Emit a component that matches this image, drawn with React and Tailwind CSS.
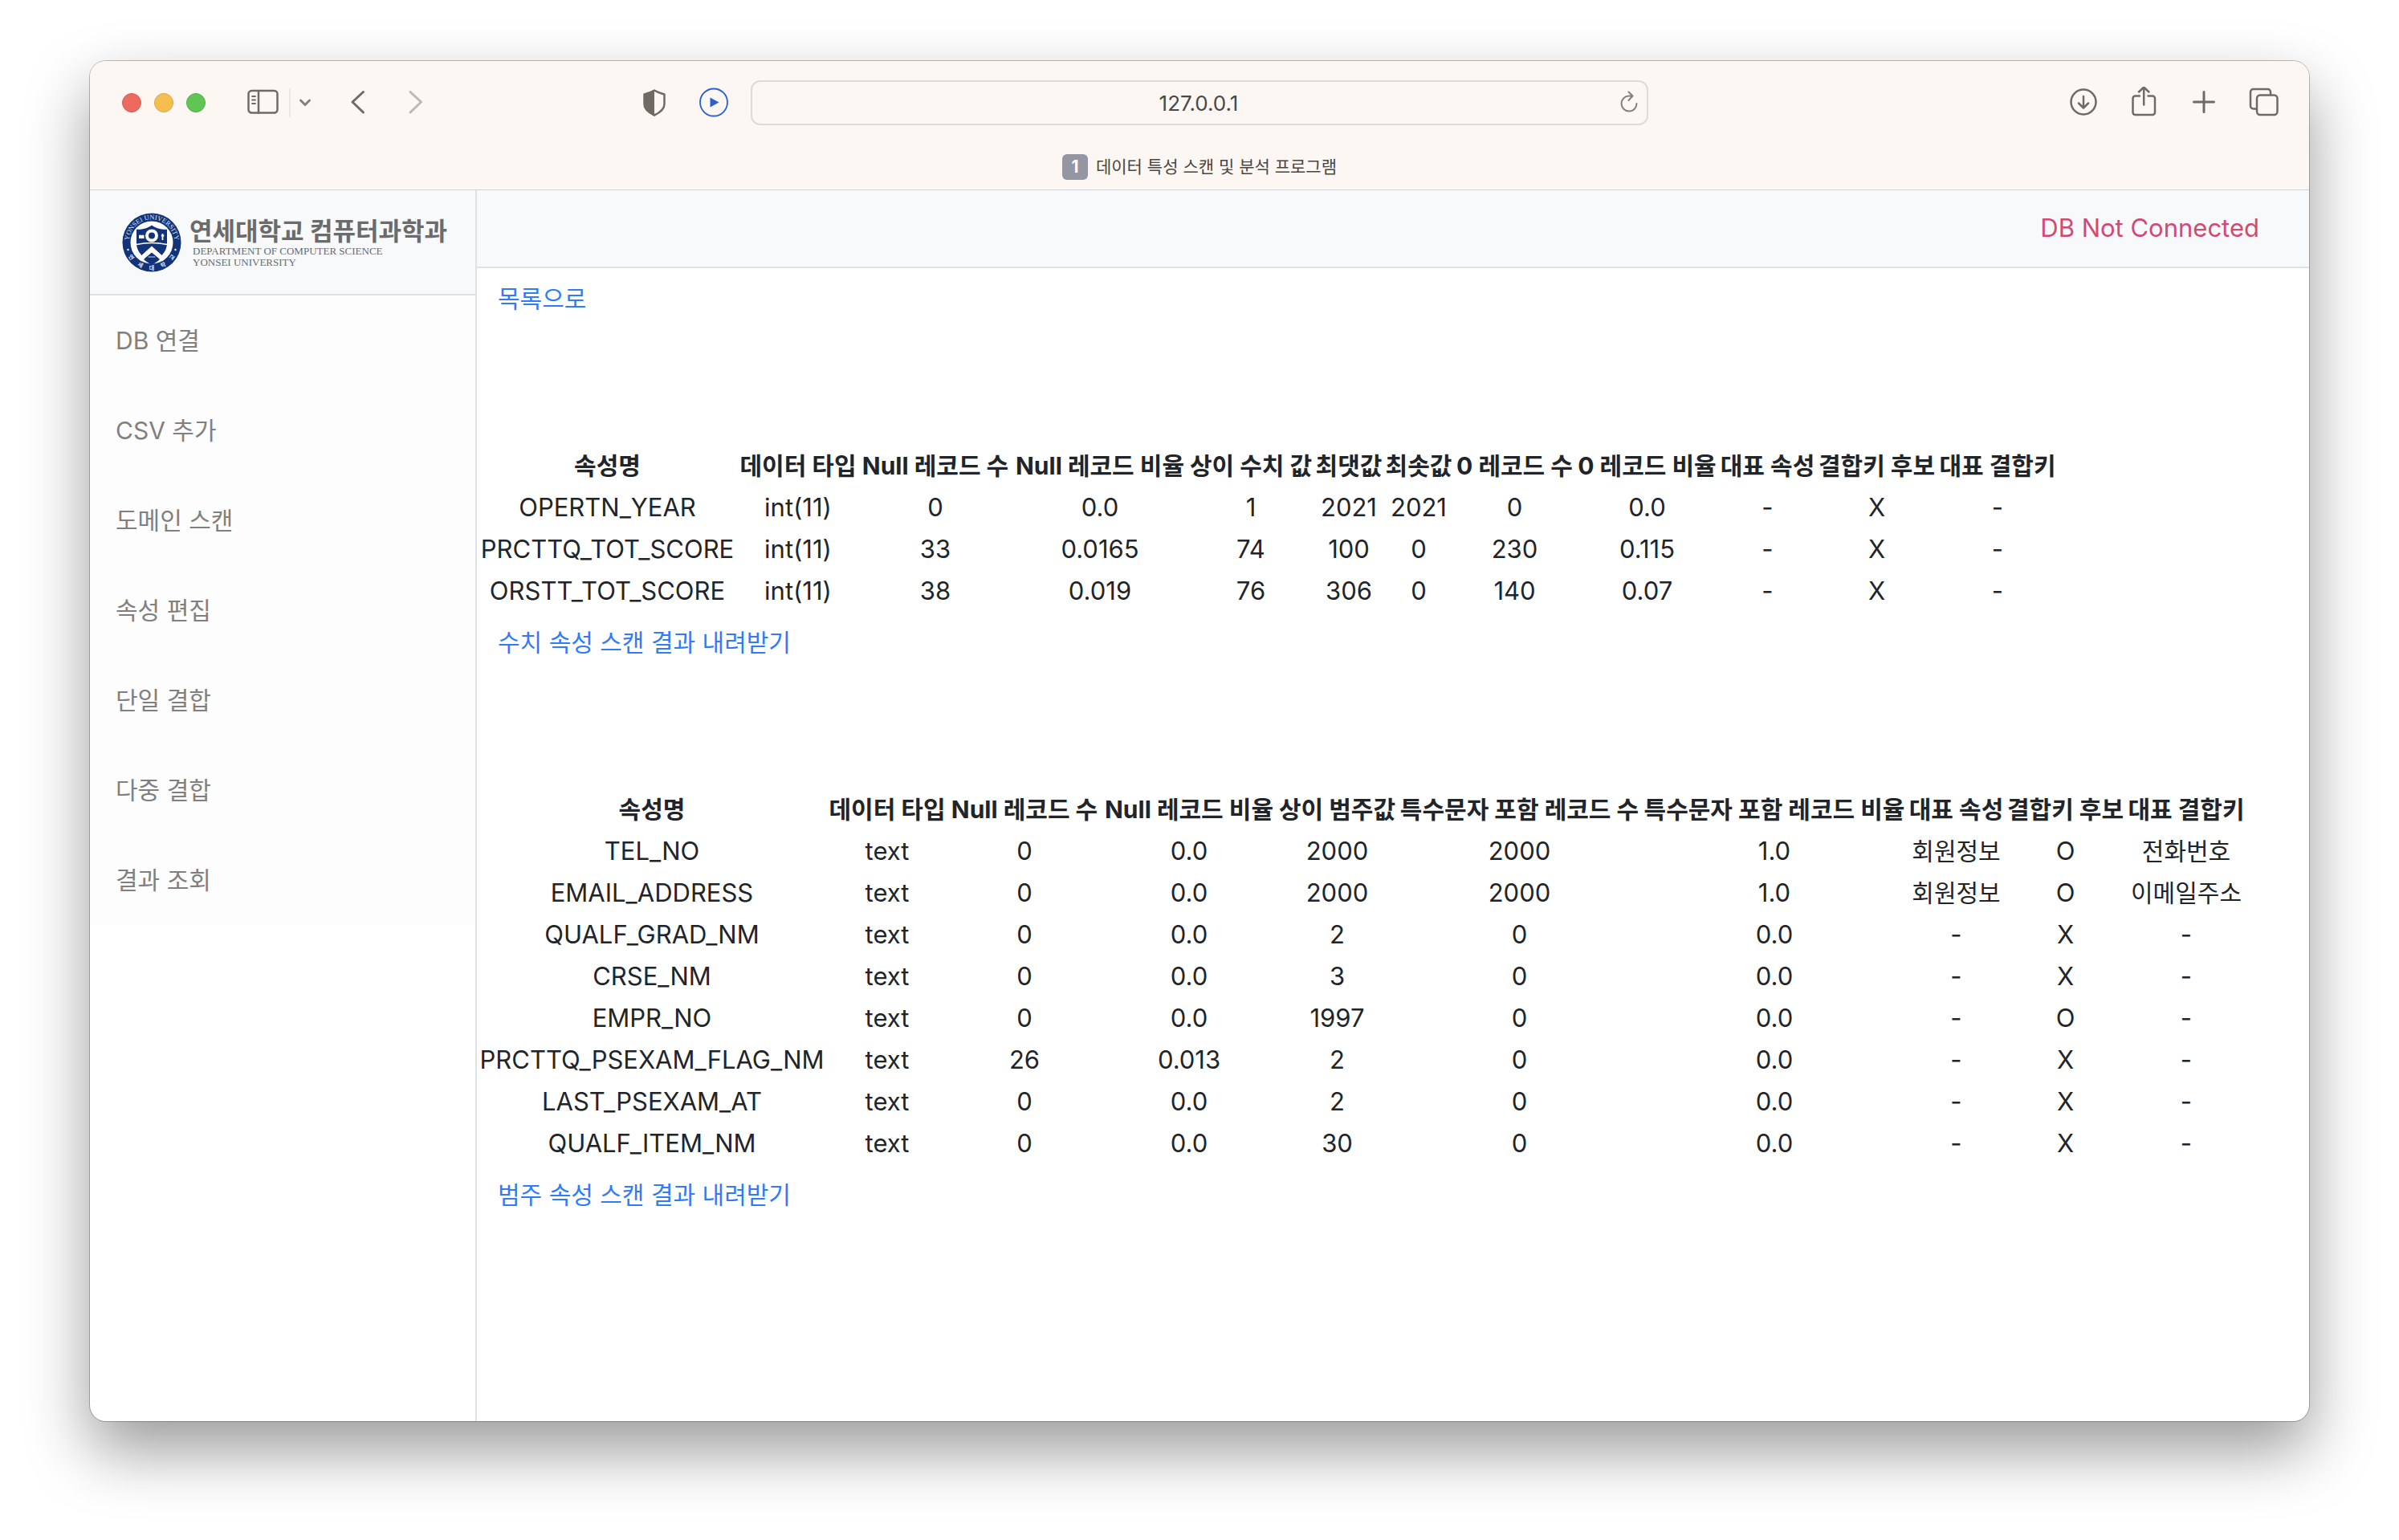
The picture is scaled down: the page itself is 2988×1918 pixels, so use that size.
import React from "react";

const MENU = ["DB 연결", "CSV 추가", "도메인 스캔", "속성 편집", "단일 결합", "다중 결합", "결과 조회"];

const NUMERIC = {
  cols: ["w-[325px]", "w-[150px]", "w-[192px]", "w-[218px]", "w-[158px]", "w-[86px]", "w-[88px]", "w-[151px]", "w-[179px]", "w-[121px]", "w-[151px]", "w-[150px]"],
  head: ["속성명", "데이터 타입", "Null 레코드 수", "Null 레코드 비율", "상이 수치 값", "최댓값", "최솟값", "0 레코드 수", "0 레코드 비율", "대표 속성", "결합키 후보", "대표 결합키"],
  rows: [
    ["OPERTN_YEAR", "int(11)", "0", "0.0", "1", "2021", "2021", "0", "0.0", "-", "X", "-"],
    ["PRCTTQ_TOT_SCORE", "int(11)", "33", "0.0165", "74", "100", "0", "230", "0.115", "-", "X", "-"],
    ["ORSTT_TOT_SCORE", "int(11)", "38", "0.019", "76", "306", "0", "140", "0.07", "-", "X", "-"],
  ],
};

const CATEGORY = {
  cols: ["w-[436px]", "w-[150px]", "w-[192px]", "w-[218px]", "w-[151px]", "w-[303px]", "w-[332px]", "w-[121px]", "w-[151px]", "w-[150px]"],
  head: ["속성명", "데이터 타입", "Null 레코드 수", "Null 레코드 비율", "상이 범주값", "특수문자 포함 레코드 수", "특수문자 포함 레코드 비율", "대표 속성", "결합키 후보", "대표 결합키"],
  rows: [
    ["TEL_NO", "text", "0", "0.0", "2000", "2000", "1.0", "회원정보", "O", "전화번호"],
    ["EMAIL_ADDRESS", "text", "0", "0.0", "2000", "2000", "1.0", "회원정보", "O", "이메일주소"],
    ["QUALF_GRAD_NM", "text", "0", "0.0", "2", "0", "0.0", "-", "X", "-"],
    ["CRSE_NM", "text", "0", "0.0", "3", "0", "0.0", "-", "X", "-"],
    ["EMPR_NO", "text", "0", "0.0", "1997", "0", "0.0", "-", "O", "-"],
    ["PRCTTQ_PSEXAM_FLAG_NM", "text", "26", "0.013", "2", "0", "0.0", "-", "X", "-"],
    ["LAST_PSEXAM_AT", "text", "0", "0.0", "2", "0", "0.0", "-", "X", "-"],
    ["QUALF_ITEM_NM", "text", "0", "0.0", "30", "0", "0.0", "-", "X", "-"],
  ],
};

const SEAL_LETTERS = [["연", "20%"], ["세", "35%"], ["대", "50%"], ["학", "65%"], ["교", "80%"]];

function Icon({ children, className = "", box = "0 0 40 40" }) {
  return (
    <svg viewBox={box} className={"size-10 shrink-0 " + className} fill="none" stroke="currentColor" strokeWidth="3" strokeLinecap="round" strokeLinejoin="round" aria-hidden="true">
      {children}
    </svg>
  );
}

function Seal() {
  return (
    <svg viewBox="0 0 74 74" className="size-[74px] shrink-0" aria-hidden="true">
      <defs>
        <path id="seal-top" d="M9.500 44.400A28.500 28.500 0 1 1 64.500 44.400" />
        <path id="seal-bottom" d="M3 37a34 34 0 0 0 68 0" />
      </defs>
      <circle cx="37" cy="37" r="36.500" fill="#12337a" />
      <circle cx="37" cy="37" r="26.500" fill="#fff" />
      <text fontSize="8.500" fill="#dfe5f1" fontFamily="Liberation Serif, serif" textAnchor="middle">
        <textPath href="#seal-top" startOffset="50%">YONSEI UNIVERSITY</textPath>
      </text>
      {SEAL_LETTERS.map(([c, at]) => (
        <text key={c} fontSize="7" fill="#dfe5f1" fontWeight="700" fontFamily="Noto Sans CJK KR, sans-serif" textAnchor="middle">
          <textPath href="#seal-bottom" startOffset={at}>{c}</textPath>
        </text>
      ))}
      <circle cx="7.500" cy="46" r="1.200" fill="#fff" />
      <circle cx="66.500" cy="46" r="1.200" fill="#fff" />
      <path d="M37 15.500c5 4 12 5.500 19 5.200v17c0 10-7 18-19 24-12-6-19-14-19-24v-17c7 .3 14-1.200 19-5.200z" fill="#12337a" />
      <path d="M18 39.500c12-2.500 26-2.500 38 0" stroke="#fff" strokeWidth="1.500" fill="none" />
      <path d="M37 41.500 54 57l-4 3.500-13-11-13 11-4-3.500z" fill="#fff" />
      <path d="m37 50 10 8c-3 3-6 5-10 6.500-4-1.500-7-3.500-10-6.500z" fill="#12337a" />
      <path d="M32.500 55h9" stroke="#8c9cc0" strokeWidth="1.500" />
      <circle cx="37" cy="28.500" r="6" fill="none" stroke="#fff" strokeWidth="4" />
      <path d="M21 28c1.200-.8 2.300-.8 3.300 0 1-.8 2.100-.8 3.200 0v4h-6.500z" fill="#fff" />
      <path d="M50.500 26v8M48.800 28.500h3.500" stroke="#fff" strokeWidth="1.800" />
    </svg>
  );
}

function Toolbar() {
  return (
    <header className="border-b border-[#cfd1d5] bg-[#fcf7f3] text-[#706a64]">
      <div className="grid h-[104px] grid-cols-[823fr_1118fr_823fr] items-center">
        <div className="flex items-center pr-[26px] pl-10">
          <div className="flex gap-4">
            <button aria-label="닫기" className="size-6 rounded-full border border-[#d85a50] bg-[#ec6a5e]" />
            <button aria-label="최소화" className="size-6 rounded-full border border-[#dca63f] bg-[#f5bf4f]" />
            <button aria-label="확대" className="size-6 rounded-full border border-[#50ad41] bg-[#61c554]" />
          </div>
          <button aria-label="사이드바" className="ml-13">
            <Icon>
              <rect x="1.500" y="5" width="36" height="27.500" rx="4" strokeWidth="2.500" />
              <path d="M14 5v27.500" strokeWidth="2.500" />
              <path d="M6 12h4M6 16.500h4M6 21h4" strokeWidth="1.800" />
            </Icon>
          </button>
          <div className="ml-3 h-9 w-0.5 bg-[#ece7e3]" />
          <button aria-label="탭 그룹" className="ml-2">
            <svg viewBox="0 0 20 40" className="h-10 w-5" fill="none" stroke="#858079" strokeWidth="3" strokeLinecap="round" strokeLinejoin="round" aria-hidden="true">
              <path d="m4.500 17 5.500 5.500 5.500-5.500" />
            </svg>
          </button>
          <button aria-label="뒤로" className="ml-9">
            <Icon><path d="M26.500 6.500 13 19l13.500 13" /></Icon>
          </button>
          <button aria-label="앞으로" className="ml-8 text-[#bdb8b3]" disabled>
            <Icon><path d="m13 6.500 13.500 12.500L13 32" /></Icon>
          </button>
          <button aria-label="개인정보 보호 리포트" className="ml-auto">
            <Icon>
              <path d="M20 4.500c4 2.500 8 3.500 12.500 5v12c0 6.500-5 10.500-12.500 14-7.500-3.500-12.500-7.500-12.500-14v-12C12 8 16 7 20 4.500z" strokeWidth="2.500" />
              <path d="M20 4.500v31c-7.500-3.500-12.500-7.500-12.500-14v-12C12 8 16 7 20 4.500z" fill="currentColor" stroke="none" />
            </Icon>
          </button>
          <button aria-label="재생" className="ml-[34px] text-[#2a5fd6]">
            <Icon>
              <circle cx="20" cy="19.500" r="17" strokeWidth="1.800" />
              <path d="M15.500 13.500v12l11-6z" fill="currentColor" stroke="none" />
            </Icon>
          </button>
        </div>
        <div className="flex h-14 items-center rounded-xl border-2 border-[#dedad5] pr-1.5 pl-9">
          <input aria-label="주소" defaultValue="127.0.0.1" className="min-w-0 flex-1 bg-transparent text-center text-[26px] text-[#4a4846] outline-none" />
          <button aria-label="새로 고침" className="text-[#85807a]">
            <svg viewBox="0 0 32 36" className="h-9 w-8" fill="none" stroke="currentColor" strokeWidth="2" strokeLinecap="round" strokeLinejoin="round" aria-hidden="true">
              <path d="M18.500 9.500h-2.500a9.500 9.500 0 1 0 9.500 9.500M15.500 4.500l5 5-5 5.500" />
            </svg>
          </button>
        </div>
        <div className="flex items-center justify-end gap-[35px] pr-9">
          <button aria-label="다운로드">
            <Icon>
              <circle cx="20" cy="19" r="15.500" strokeWidth="2.500" />
              <path d="M20 12v14M14 20.500l6 6 6-6" strokeWidth="2.500" />
            </Icon>
          </button>
          <button aria-label="공유">
            <Icon>
              <path d="M15 11.500H9.500a3 3 0 0 0-3 3v17.500a3 3 0 0 0 3 3h21.500a3 3 0 0 0 3-3v-17.500a3 3 0 0 0-3-3h-5.500M20.200 22.500v-22M14 6.500l6.200-6 6.200 6" strokeWidth="2.500" />
            </Icon>
          </button>
          <button aria-label="새로운 탭">
            <Icon><path d="M20 6.500v25M7.500 19h25" /></Icon>
          </button>
          <button aria-label="탭 개요">
            <Icon>
              <rect x="11" y="10.500" width="25.500" height="24.500" rx="4" strokeWidth="2.500" />
              <path d="M10.500 27.500H6.500a3.500 3.500 0 0 1-3.500-3.500V6.500a3.500 3.500 0 0 1 3.500-3.500h18a3.500 3.500 0 0 1 3.500 3.500v3.500" strokeWidth="2.500" />
            </Icon>
          </button>
        </div>
      </div>
      <div className="flex h-14 items-center justify-center gap-2.5 text-[21px] text-[#4a4640]">
        <span className="flex size-8 items-center justify-center rounded-md bg-[#9496a1] font-bold text-white">1</span>
        <span>데이터 특성 스캔 및 분석 프로그램</span>
      </div>
    </header>
  );
}

function ResultTable({ data }) {
  return (
    <table className="border-collapse text-center text-[31px] leading-12 whitespace-nowrap">
      <colgroup>
        {data.cols.map((w, i) => <col key={i} className={w} />)}
      </colgroup>
      <thead>
        <tr>{data.head.map((h) => <th key={h} scope="col" className="px-0 py-0.5 text-[30px] font-bold">{h}</th>)}</tr>
      </thead>
      <tbody>
        {data.rows.map((r) => (
          <tr key={r[0]}>
            {r.map((c, i) => (
              <td key={i} className={/[가-힣]/.test(c) ? "px-0 py-0.5 text-[30px]" : "px-0 py-0.5"}>{c}</td>
            ))}
          </tr>
        ))}
      </tbody>
    </table>
  );
}

function LinkButton({ children }) {
  return <a href="#" className="flex h-19 w-fit items-center px-[26px] text-[30px] text-[#2f7cf6]">{children}</a>;
}

export default function App() {
  return (
    <div className="flex min-h-screen flex-col bg-white px-28 pt-[76px] pb-[148px] font-['Inter','Noto_Sans_CJK_KR',sans-serif]">
      <div className="flex flex-1 flex-col overflow-hidden rounded-[20px] bg-white shadow-[0_0_0_1px_rgba(0,0,0,0.25),0_36px_80px_rgba(0,0,0,0.4)]">
        <Toolbar />
        <div className="flex flex-1">
          <aside className="w-[482px] shrink-0 border-r-2 border-[#dee2e6]">
            <a href="#" className="flex h-[131px] items-center gap-2.5 border-b-2 border-[#dee2e6] bg-[#f8f9fb] pl-10 text-[#6b6b6b]">
              <Seal />
              <span className="flex flex-col whitespace-nowrap">
                <span className="text-[31px] leading-9 font-bold">연세대학교 컴퓨터과학과</span>
                <span className="pl-1 font-['Liberation_Serif',serif] text-[13px] leading-[14px]">DEPARTMENT OF COMPUTER SCIENCE<br />YONSEI UNIVERSITY</span>
              </span>
            </a>
            <nav className="flex flex-col bg-[#fdfdfd]">
              {MENU.map((m) => (
                <a key={m} href="#" className="flex h-28 items-center px-8 text-[30px] text-[#808080]">{m}</a>
              ))}
            </nav>
          </aside>
          <main className="min-w-0 flex-1 text-[#212529]">
            <div className="flex h-[97px] items-center justify-end border-b-2 border-[#dee2e6] bg-[#f8f9fb] px-[62px] text-[31px] text-[#cf4b73]">
              DB Not Connected
            </div>
            <LinkButton>목록으로</LinkButton>
            <section className="pt-36">
              <ResultTable data={NUMERIC} />
              <LinkButton>수치 속성 스캔 결과 내려받기</LinkButton>
            </section>
            <section className="pt-36">
              <ResultTable data={CATEGORY} />
              <LinkButton>범주 속성 스캔 결과 내려받기</LinkButton>
            </section>
          </main>
        </div>
      </div>
    </div>
  );
}
